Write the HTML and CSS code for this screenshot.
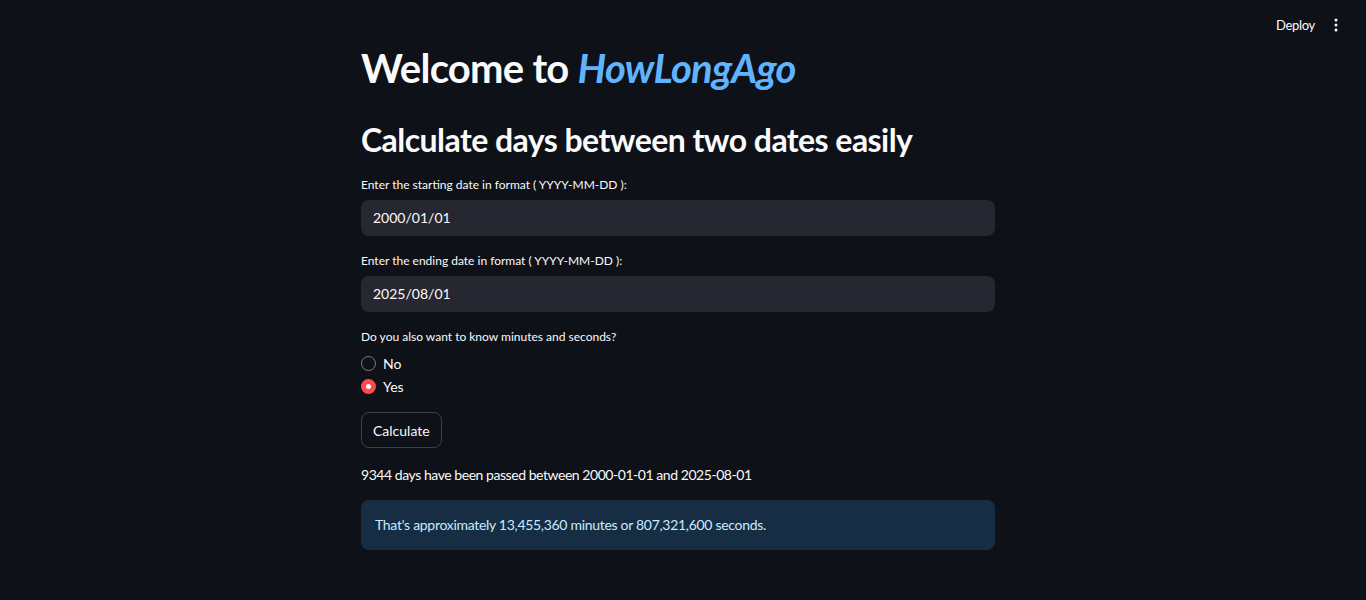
FILE: index.html
```html
<!DOCTYPE html>
<html>
<head>
<meta charset="utf-8">
<link rel="stylesheet" href="styles.css">
</head>
<body>
<header class="topbar">
  <span class="deploy">Deploy</span>
  <span class="kebab" aria-label="menu">
    <svg width="16" height="16" viewBox="0 0 16 16"><circle cx="8" cy="3" r="1.5" fill="#fafafa"/><circle cx="8" cy="8" r="1.5" fill="#fafafa"/><circle cx="8" cy="13" r="1.5" fill="#fafafa"/></svg>
  </span>
</header>
<main class="container">
  <h1 class="title">Welcome to <em class="brand">HowLongAgo</em></h1>
  <h2 class="subtitle">Calculate days between two dates easily</h2>

  <div class="field">
    <label class="label">Enter the starting date in format ( YYYY-MM-DD ):</label>
    <div class="input">2000/01/01</div>
  </div>
  <div class="field">
    <label class="label">Enter the ending date in format ( YYYY-MM-DD ):</label>
    <div class="input">2025/08/01</div>
  </div>

  <div class="field radios">
    <label class="label">Do you also want to know minutes and seconds?</label>
    <div class="radio"><span class="dot"></span><span>No</span></div>
    <div class="radio checked"><span class="dot"></span><span>Yes</span></div>
  </div>

  <button class="btn">Calculate</button>

  <p class="result">9344 days have been passed between 2000-01-01 and 2025-08-01</p>

  <div class="info">That's approximately 13,455,360 minutes or 807,321,600 seconds.</div>
</main>
</body>
</html>
```
FILE: styles.css
```css
html, body {
  margin: 0;
  padding: 0;
  background: #0e1117;
  color: #fafafa;
  font-family: "Lato", "Liberation Sans", sans-serif;
}
.topbar {
  height: 50px;
  display: flex;
  justify-content: flex-end;
  align-items: center;
  gap: 13px;
  padding-right: 22px;
}
.deploy {
  font-size: 13px;
  letter-spacing: -0.3px;
  color: #fafafa;
}
.kebab {
  display: flex;
  align-items: center;
}
.container {
  width: 634px;
  margin: -6px auto 0;
  position: relative;
  left: -5px;
}
.title {
  margin: 0;
  font-size: 40px;
  font-weight: 700;
  line-height: 1.2;
  letter-spacing: -0.75px;
}
.brand {
  color: #60b4ff;
  font-style: italic;
}
.subtitle {
  margin: 29px 0 0;
  font-size: 32px;
  font-weight: 700;
  line-height: 1.2;
  letter-spacing: -0.55px;
}
.field {
  margin-top: 18px;
}
.label {
  display: block;
  font-size: 12px;
  line-height: 16px;
  margin-bottom: 7px;
}
.input {
  background: #262730;
  border-radius: 8px;
  height: 36px;
  line-height: 36px;
  padding: 0 12px;
  font-size: 14px;
}
.field + .field { margin-top: 17px; }
.radios .label { margin-bottom: 7px; }
.radio {
  display: flex;
  align-items: center;
  gap: 7px;
  height: 23px;
  font-size: 14px;
}
.dot {
  box-sizing: border-box;
  width: 15px;
  height: 15px;
  border-radius: 50%;
  border: 1px solid rgba(250,250,250,0.45);
}
.radio.checked .dot {
  border: 5px solid #ff4b4b;
  background: #fff;
}
.btn {
  margin-top: 14px;
  display: block;
  background: transparent;
  color: #fafafa;
  border: 1px solid rgba(250,250,250,0.2);
  border-radius: 8px;
  height: 36px;
  padding: 0 11px;
  font-family: inherit;
  font-size: 14px;
}
.result {
  margin: 17px 0 0;
  font-size: 14px;
  line-height: 20px;
  letter-spacing: -0.45px;
}
.info {
  margin-top: 15px;
  background: #172d43;
  color: #c7ebff;
  border-radius: 8px;
  padding: 14px 14px;
  font-size: 14px;
  line-height: 22px;
  letter-spacing: -0.3px;
}
```
